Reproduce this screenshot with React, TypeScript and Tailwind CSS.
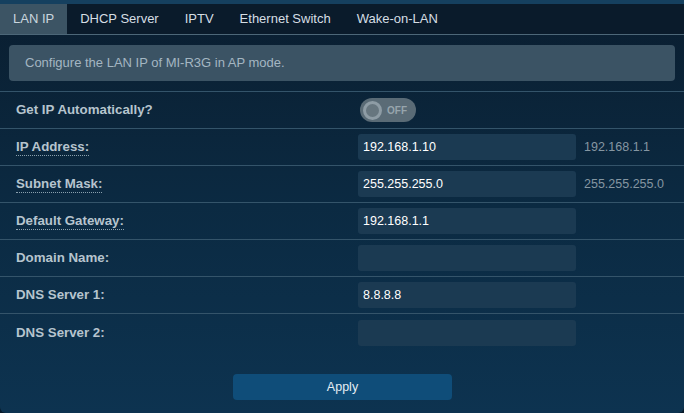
import React from "react"

const tabs = ["LAN IP", "DHCP Server", "IPTV", "Ethernet Switch", "Wake-on-LAN"]

type Row = { label: string; value?: string; hint?: string; dotted?: boolean; toggle?: boolean }

const rows: Row[] = [
  { label: "Get IP Automatically?", toggle: true },
  { label: "IP Address:", value: "192.168.1.10", hint: "192.168.1.1", dotted: true },
  { label: "Subnet Mask:", value: "255.255.255.0", hint: "255.255.255.0", dotted: true },
  { label: "Default Gateway:", value: "192.168.1.1", dotted: true },
  { label: "Domain Name:", value: "" },
  { label: "DNS Server 1:", value: "8.8.8.8" },
  { label: "DNS Server 2:", value: "" },
]

export default function App() {
  return (
    <div
      className="w-[684px] h-[413px] overflow-hidden bg-[#071a2a] text-[12px]"
      style={{ fontFamily: '"Liberation Sans", Arial, sans-serif' }}
    >
      <div className="h-[413px] rounded-b-[6px] bg-gradient-to-b from-[#0a1e30] via-[#0b2a42] to-[#0d3350] flex flex-col">
        {/* top strip */}
        <div className="h-[4px] bg-[#15405f]" />

        {/* TABS */}
        <div className="flex h-[31px] bg-[#0a1b2b] border-b border-[#4d6778]">
          {tabs.map((t, i) => (
            <div
              key={t}
              className={`flex items-center px-[13px] text-[13px] ${
                i === 0 ? "bg-[#3c5464] text-[#c9d6de]" : "text-[#d5dee4]"
              }`}
            >
              {t}
            </div>
          ))}
        </div>

        {/* INFO */}
        <div className="mx-[9px] mt-[10px] h-[36px] rounded-[4px] bg-[#3b5364] flex items-center px-[16px] text-[13px] text-[#a4b6c2]">
          Configure the LAN IP of MI-R3G in AP mode.
        </div>

        {/* FORM */}
        <div className="mt-[10px] border-t border-[#34546a]">
          {rows.map((r, i) => (
            <div
              key={r.label}
              className={`flex items-center h-[37px] ${i < rows.length - 1 ? "border-b border-[#34546a]" : ""}`}
            >
              <div className="w-[342px] pl-[16px] font-bold text-[13.3px] text-[#b6c4ce]">
                <span className={r.dotted ? "border-b border-dotted border-[#8aa0ae] pb-[1px]" : ""}>{r.label}</span>
              </div>
              <div className="flex items-center pl-[16px]">
                {r.toggle ? (
                  <div className="ml-[2px] flex items-center w-[56px] h-[24px] rounded-full bg-[#5a6b76] pl-[3px]">
                    <div className="w-[19px] h-[19px] rounded-full border-[3px] border-[#8e9ca5] bg-[#67767f]" />
                    <span className="ml-[5px] text-[10px] font-bold text-[#97a5ad]">OFF</span>
                  </div>
                ) : (
                  <>
                    <div className="w-[218px] h-[26px] rounded-[3px] bg-[#1b3a52] flex items-center pl-[5px] text-white text-[12.5px]">
                      {r.value}
                    </div>
                    {r.hint && <span className="ml-[8px] text-[#8596a2] text-[12.5px]">{r.hint}</span>}
                  </>
                )}
              </div>
            </div>
          ))}
        </div>

        {/* APPLY */}
        <div className="flex justify-center mt-[23px]">
          <button className="ml-[1px] w-[219px] h-[26px] rounded-[4px] bg-[#0f4d79] text-[#e6eef4] text-[12.5px]">
            Apply
          </button>
        </div>
      </div>
    </div>
  )
}
